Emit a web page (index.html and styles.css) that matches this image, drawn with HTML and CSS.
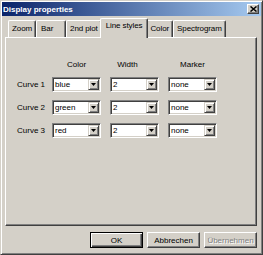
FILE: index.html
```html
<!DOCTYPE html>
<html lang="de">
  <head>
    <meta charset="UTF-8" />
    <title>Display properties</title>
    <link rel="stylesheet" href="styles.css">
  </head>
  <body>
    <div class="window">
      <div class="titlebar">
        <span class="title">Display properties</span>
        <span class="close">
          <svg width="7" height="6" viewBox="0 0 7 6"><path d="M0.5 0.5l6 5M6.5 0.5l-6 5" stroke="#000" stroke-width="1.5"/></svg>
        </span>
      </div>

      <div class="content">
        <div class="tabs">
          <div class="tab">Zoom</div>
          <div class="tab tab-bar">Bar</div>
          <div class="tab">2nd plot</div>
          <div class="tab active">Line styles</div>
          <div class="tab">Color</div>
          <div class="tab">Spectrogram</div>
        </div>

        <div class="panel">
          <div class="grid">
            <span></span>
            <span class="head">Color</span>
            <span class="head head-width">Width</span>
            <span class="head">Marker</span>

            <span class="label">Curve 1</span>
            <div class="combo"><span class="value">blue</span><span class="drop"><svg width="5" height="3"><path d="M0 0h5L2.5 3z"/></svg></span></div>
            <div class="combo"><span class="value">2</span><span class="drop"><svg width="5" height="3"><path d="M0 0h5L2.5 3z"/></svg></span></div>
            <div class="combo"><span class="value">none</span><span class="drop"><svg width="5" height="3"><path d="M0 0h5L2.5 3z"/></svg></span></div>

            <span class="label">Curve 2</span>
            <div class="combo"><span class="value">green</span><span class="drop"><svg width="5" height="3"><path d="M0 0h5L2.5 3z"/></svg></span></div>
            <div class="combo"><span class="value">2</span><span class="drop"><svg width="5" height="3"><path d="M0 0h5L2.5 3z"/></svg></span></div>
            <div class="combo"><span class="value">none</span><span class="drop"><svg width="5" height="3"><path d="M0 0h5L2.5 3z"/></svg></span></div>

            <span class="label">Curve 3</span>
            <div class="combo"><span class="value">red</span><span class="drop"><svg width="5" height="3"><path d="M0 0h5L2.5 3z"/></svg></span></div>
            <div class="combo"><span class="value">2</span><span class="drop"><svg width="5" height="3"><path d="M0 0h5L2.5 3z"/></svg></span></div>
            <div class="combo"><span class="value">none</span><span class="drop"><svg width="5" height="3"><path d="M0 0h5L2.5 3z"/></svg></span></div>
          </div>
        </div>

        <div class="buttons">
          <button class="btn default">OK</button>
          <button class="btn">Abbrechen</button>
          <button class="btn" disabled>Übernehmen</button>
        </div>
      </div>
    </div>
  </body>
</html>
```

FILE: styles.css
```css
body {
  margin: 0;
  font-family: 'Liberation Sans', Arial, sans-serif;
  font-size: 8px;
  color: #000;
  background: #d4d0c8;
}

.window {
  width: 263px;
  height: 255px;
  box-sizing: border-box;
  padding: 1px;
  background: #d4d0c8;
  border: 1px solid;
  border-color: #d4d0c8 #404040 #404040 #d4d0c8;
  box-shadow: inset 1px 1px #fff, inset -1px -1px #808080;
  display: flex;
  flex-direction: column;
}

.titlebar {
  height: 14px;
  padding: 0 2px 0 1px;
  background: linear-gradient(to right, #0a246a, #a6caf0);
  display: flex;
  align-items: center;
  justify-content: space-between;
}

.title {
  color: white;
  font-weight: bold;
  font-size: 8px;
}

.close {
  width: 12px;
  height: 10px;
  box-sizing: border-box;
  background: #d4d0c8;
  border: 1px solid;
  border-color: #fff #404040 #404040 #fff;
  box-shadow: inset -1px -1px #808080;
  display: flex;
  align-items: center;
  justify-content: center;
}

.content {
  flex: 1;
  padding: 2px 4px 0 3px;
  display: flex;
  flex-direction: column;
}

/* tab strip */
.tabs {
  height: 19px;
  padding-left: 3px;
  display: flex;
  align-items: flex-end;
}

.tab {
  height: 17px;
  box-sizing: border-box;
  padding: 0 3px;
  line-height: 15px;
  letter-spacing: -0.1px;
  border-top: 1px solid #fff;
  border-left: 1px solid #fff;
  border-right: 1px solid #404040;
  border-radius: 2px 2px 0 0;
  box-shadow: inset -1px 0 #808080;
  white-space: nowrap;
}

.tab-bar {
  width: 30px;
  padding-left: 4px;
}

.tab.active {
  position: relative;
  z-index: 1;
  height: 20px;
  margin: 0 -2px -1px;
  padding: 0 5px;
  line-height: 14px;
  background: #d4d0c8;
}

.panel {
  height: 189px;
  box-sizing: border-box;
  padding: 22px 0 0 11px;
  border: 1px solid;
  border-color: #fff #404040 #404040 #fff;
  box-shadow: inset -1px -1px #808080;
}

.grid {
  display: grid;
  grid-template-columns: 26px 49px 49px 49px;
  column-gap: 9px;
  row-gap: 8px;
  align-items: center;
}

.head {
  text-align: center;
  line-height: 9px;
}

.head-width {
  padding-right: 14px;
}

.label {
  white-space: nowrap;
}

/* combo boxes */
.combo {
  height: 15px;
  box-sizing: border-box;
  padding: 1px;
  background: white;
  border: 1px solid;
  border-color: #808080 #fff #fff #808080;
  box-shadow: inset 1px 1px #404040, inset -1px -1px #d4d0c8;
  display: flex;
}

.value {
  flex: 1;
  padding-left: 1px;
  line-height: 11px;
}

.drop {
  width: 11px;
  height: 11px;
  box-sizing: border-box;
  background: #d4d0c8;
  border: 1px solid;
  border-color: #d4d0c8 #404040 #404040 #d4d0c8;
  box-shadow: inset 1px 1px #fff, inset -1px -1px #808080;
  display: flex;
  align-items: center;
  justify-content: center;
}

.drop svg {
  display: block;
}

/* bottom buttons */
.buttons {
  margin-top: 6px;
  display: flex;
  justify-content: flex-end;
  gap: 4px;
}

.btn {
  width: 53px;
  height: 16px;
  padding: 0;
  font-family: inherit;
  font-size: 8px;
  color: #000;
  background: #d4d0c8;
  border: 1px solid;
  border-color: #fff #404040 #404040 #fff;
  box-shadow: inset -1px -1px #808080;
}

.btn.default {
  border-color: #000;
  box-shadow: inset 1px 1px #fff, inset -1px -1px #404040, inset -2px -2px #808080;
}

.btn:disabled {
  color: #808080;
  text-shadow: 1px 1px #fff;
}
```
